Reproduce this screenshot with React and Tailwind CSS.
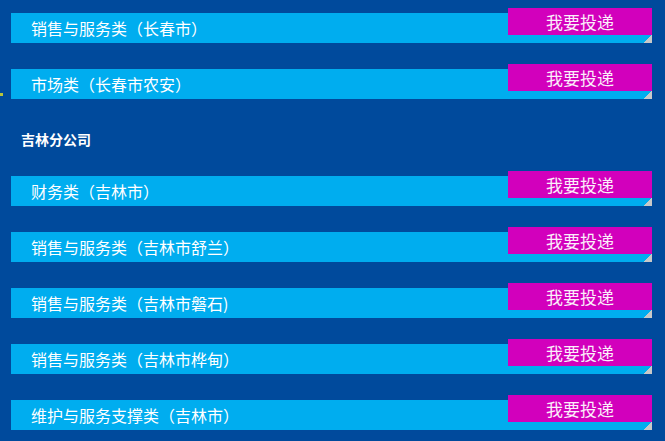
import React from "react";

const group1 = ["销售与服务类（长春市）", "市场类（长春市农安）"];
const group2 = [
  "财务类（吉林市）",
  "销售与服务类（吉林市舒兰）",
  "销售与服务类（吉林市磐石)",
  "销售与服务类（吉林市桦甸）",
  "维护与服务支撑类（吉林市）",
];

function Row({ title }) {
  return (
    <div className="relative flex h-[30px] w-[641px]">
      <div className="flex h-full w-[633px] items-center bg-[#00adef] pl-[20px] text-[16px] leading-none text-white">
        {title}
      </div>
      <div className="flex h-full w-[8px] flex-col">
        <div className="h-[22px] w-full bg-[#004a9c]" />
        <div className="h-[8px] w-full bg-[linear-gradient(to_bottom_right,#00adef_50%,#c8c8c8_50%)]" />
      </div>
      <div className="absolute right-0 top-[-5px] flex h-[27px] w-[144px] items-center justify-center bg-[#d200bc] text-[17px] leading-none text-[#fbeefa]">
        我要投递
      </div>
    </div>
  );
}

export default function App() {
  return (
    <div
      className="relative min-h-[441px] w-[665px] overflow-hidden bg-[#004a9c] pl-[11px] pt-[13px]"
      style={{ fontFamily: '"Noto Sans CJK SC", "Noto Sans", sans-serif' }}
    >
      <div className="absolute left-0 top-[93px] h-[3px] w-[3px] bg-[#b8c43a]" />
      <div className="flex flex-col gap-[26px]">
        {group1.map((t) => (
          <Row key={t} title={t} />
        ))}
      </div>
      <div className="mt-[30px] mb-[27px] flex h-[20px] items-center pl-[10px] text-[14px] font-bold leading-none text-white">
        吉林分公司
      </div>
      <div className="flex flex-col gap-[26px]">
        {group2.map((t) => (
          <Row key={t} title={t} />
        ))}
      </div>
    </div>
  );
}
